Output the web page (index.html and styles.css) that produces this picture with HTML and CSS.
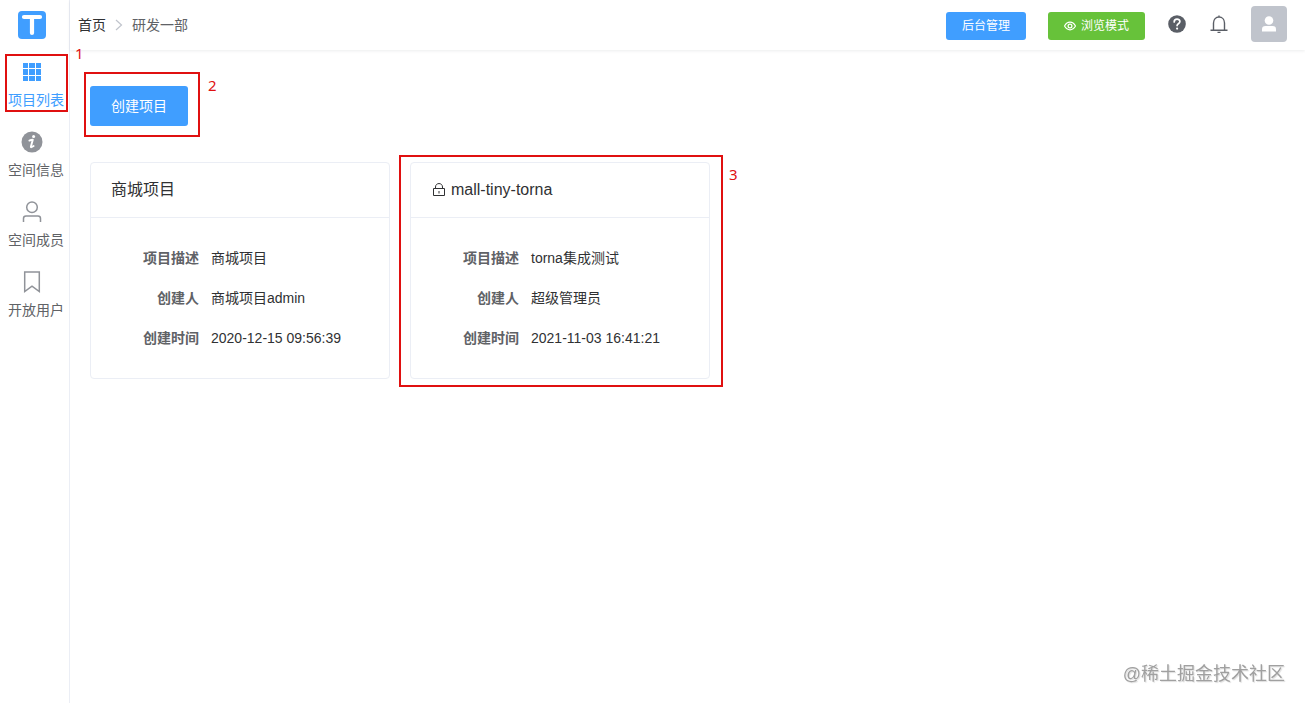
FILE: index.html
```html
<!DOCTYPE html>
<html lang="zh-CN">
<head>
  <meta charset="UTF-8">
  <title>Torna</title>
  <link rel="stylesheet" href="styles.css">
</head>
<body>
  <aside class="sidebar">
    <a class="logo" href="#" aria-label="Torna">
      <svg width="28" height="28" viewBox="0 0 28 28">
        <rect width="28" height="28" rx="4" fill="#409eff"/>
        <path d="M6 6h16M14 6v16" fill="none" stroke="#fff" stroke-width="4.200" stroke-linecap="round"/>
      </svg>
    </a>
    <nav class="menu">
      <a class="menu-item active" href="#">
        <svg class="menu-icon" viewBox="0 0 20 20" fill="currentColor">
          <path d="M1 1h5v5H1zM7 1h6v5H7zM14 1h5v5h-5zM1 7h5v6H1zM7 7h6v6H7zM14 7h5v6h-5zM1 14h5v5H1zM7 14h6v5H7zM14 14h5v5h-5z"/>
        </svg>
        <span>项目列表</span>
        <i class="mark mark-menu"><b>1</b></i>
      </a>
      <a class="menu-item" href="#">
        <svg class="menu-icon" viewBox="0 0 20 20">
          <circle cx="10" cy="10" r="10.500" fill="currentColor"/>
          <circle cx="11.600" cy="4.600" r="1.500" fill="#fff"/>
          <path d="M7.400 8.600q1.800-.9 3.400-.9L8.900 14.600q-.3 1.400 2.700-.6" fill="none" stroke="#fff" stroke-width="1.900" stroke-linecap="round" stroke-linejoin="round"/>
        </svg>
        <span>空间信息</span>
      </a>
      <a class="menu-item" href="#">
        <svg class="menu-icon" viewBox="0 0 20 20" fill="none" stroke="currentColor" stroke-width="1.500">
          <circle cx="10" cy="5.200" r="5.300"/>
          <path d="M1.500 20v-3.500q0-2.500 2.500-2.500h12q2.500 0 2.500 2.500V20"/>
        </svg>
        <span>空间成员</span>
      </a>
      <a class="menu-item" href="#">
        <svg class="menu-icon" viewBox="0 0 20 20" fill="none" stroke="currentColor" stroke-width="1.500">
          <path d="M2.700 0h14.600v19.500L10 14.200l-7.300 5.300z"/>
        </svg>
        <span>开放用户</span>
      </a>
    </nav>
  </aside>

  <div class="container">
    <header class="navbar">
      <nav class="breadcrumb">
        <a href="#">首页</a>
        <svg width="8" height="12" viewBox="0 0 8 12" fill="none" stroke="#c0c4cc" stroke-width="1.200">
          <path d="M1 1l5.500 5L1 11"/>
        </svg>
        <span>研发一部</span>
      </nav>
      <div class="right-menu">
        <button class="btn btn-small btn-primary">后台管理</button>
        <button class="btn btn-small btn-success">
          <svg width="12" height="12" viewBox="0 0 12 12" fill="none" stroke="currentColor" stroke-width="1.200">
            <path d="M.5 6C2 3.300 3.800 2.200 6 2.200S10 3.300 11.500 6C10 8.700 8.200 9.800 6 9.800S2 8.700.5 6z"/>
            <circle cx="6" cy="6" r="1.900"/>
          </svg>
          浏览模式
        </button>
        <button class="icon-btn" aria-label="帮助">
          <svg width="18" height="18" viewBox="0 0 18 18">
            <circle cx="9" cy="9" r="8.800" fill="#5a5e66"/>
            <path d="M6.200 6.900c0-3.700 5.700-3.600 5.700-.3 0 2.200-2.800 2.100-2.800 4" fill="none" stroke="#fff" stroke-width="1.700" stroke-linecap="round"/>
            <circle cx="9.100" cy="13.600" r="1.100" fill="#fff"/>
          </svg>
        </button>
        <button class="icon-btn" aria-label="消息">
          <svg width="18" height="18" viewBox="0 0 18 18" fill="none" stroke="#5a5e66" stroke-width="1.400">
            <path d="M.5 15.300h17M3.500 15.300V8c0-3.700 2.400-6 5.500-6s5.500 2.300 5.500 6v7.300M9 2V.5M7.500 17.400h3"/>
          </svg>
        </button>
        <button class="avatar" aria-label="用户">
          <svg width="16" height="16" viewBox="0 0 16 16" fill="#fff">
            <circle cx="8" cy="4.500" r="4.300"/>
            <path d="M1 15.500v-2.300Q1 10 4.500 10h7q3.500 0 3.500 3.200v2.300z"/>
          </svg>
        </button>
      </div>
    </header>

    <main class="app-main">
      <div class="toolbar">
        <button class="btn btn-primary">创建项目</button>
        <i class="mark mark-create"><b>2</b></i>
      </div>
      <div class="cards">
        <section class="card">
          <h2 class="card-header">商城项目</h2>
          <dl class="card-body">
            <dt>项目描述</dt><dd>商城项目</dd>
            <dt>创建人</dt><dd>商城项目admin</dd>
            <dt>创建时间</dt><dd>2020-12-15 09:56:39</dd>
          </dl>
        </section>
        <section class="card">
          <h2 class="card-header">
            <svg class="lock" width="16" height="16" viewBox="0 0 16 16" fill="none" stroke="currentColor">
              <path d="M2.500 6.500h11v7h-11zM4.500 6.500V5c0-4.600 7-4.600 7 0v1.500M8 9v2.500"/>
            </svg>
            mall-tiny-torna
          </h2>
          <dl class="card-body">
            <dt>项目描述</dt><dd>torna集成测试</dd>
            <dt>创建人</dt><dd>超级管理员</dd>
            <dt>创建时间</dt><dd>2021-11-03 16:41:21</dd>
          </dl>
          <i class="mark mark-card"><b>3</b></i>
        </section>
      </div>
    </main>
  </div>

  <div class="watermark">@稀土掘金技术社区</div>
</body>
</html>
```

FILE: styles.css
```css
* {
  box-sizing: border-box;
}

body {
  margin: 0;
  min-height: 100vh;
  display: flex;
  font-family: "Liberation Sans", "Noto Sans CJK SC", sans-serif;
  font-size: 14px;
  line-height: 20px;
  color: #303133;
  background: #fff;
}

a {
  color: inherit;
  text-decoration: none;
}

svg {
  display: block;
  flex: none;
}

/* sidebar */
.sidebar {
  flex: none;
  width: 70px;
  border-right: 1px solid #ebeef5;
}

.logo {
  display: flex;
  align-items: center;
  height: 50px;
  padding-left: 18px;
}

.menu-item {
  position: relative;
  display: flex;
  flex-direction: column;
  gap: 8px;
  height: 70px;
  padding: 12px 0 0 8px;
  white-space: nowrap;
  color: #606266;
}

.menu-icon {
  width: 20px;
  height: 20px;
  margin-left: 14px;
  overflow: visible;
  color: #909399;
}

.menu-item.active,
.menu-item.active .menu-icon {
  color: #409eff;
}

/* top bar */
.container {
  flex: 1;
  min-width: 0;
}

.navbar {
  display: flex;
  align-items: center;
  justify-content: space-between;
  height: 50px;
  padding: 0 18px 0 8px;
  box-shadow: 0 1px 3px rgba(0, 21, 41, 0.08);
}

.breadcrumb {
  display: flex;
  align-items: center;
  gap: 9px;
  color: #606266;
}

.breadcrumb a {
  color: #303133;
}

.right-menu {
  display: flex;
  align-items: center;
  gap: 22px;
  padding-bottom: 2px;
}

.btn {
  display: flex;
  align-items: center;
  justify-content: center;
  gap: 5px;
  height: 40px;
  padding: 0 21px;
  border: none;
  border-radius: 3px;
  font: inherit;
  color: #fff;
  cursor: pointer;
}

.btn-small {
  height: 28px;
  padding: 0 16px;
  margin-top: 4px;
  font-size: 12px;
}

.btn-primary {
  background: #409eff;
}

.btn-success {
  background: #67c23a;
}

.icon-btn {
  padding: 0 1px;
  border: none;
  background: none;
  cursor: pointer;
}

.avatar {
  display: flex;
  align-items: center;
  justify-content: center;
  width: 36px;
  height: 36px;
  padding: 0;
  border: none;
  border-radius: 4px;
  background: #c0c4cc;
  cursor: pointer;
}

/* content */
.app-main {
  padding: 36px 20px 20px;
}

.toolbar {
  position: relative;
  display: flex;
}

.cards {
  display: flex;
  flex-wrap: wrap;
  gap: 20px;
  margin-top: 36px;
}

.card {
  position: relative;
  width: 300px;
  border: 1px solid #ebeef5;
  border-radius: 4px;
}

.card-header {
  display: flex;
  align-items: center;
  gap: 4px;
  height: 55px;
  margin: 0;
  padding: 0 20px;
  border-bottom: 1px solid #ebeef5;
  font-size: 16px;
  font-weight: normal;
}

.card-body {
  display: grid;
  grid-template-columns: 88px 1fr;
  column-gap: 12px;
  margin: 0;
  padding: 20px 0 20px 20px;
  line-height: 40px;
}

.card-body dt {
  text-align: right;
  font-weight: bold;
  color: #606266;
}

.card-body dd {
  margin: 0;
}

/* numbered red frames */
.mark {
  position: absolute;
  border: 2px solid #e01010;
  pointer-events: none;
}

.mark b {
  position: absolute;
  left: 100%;
  font: normal 15px/20px "Noto Sans", sans-serif;
  color: #e01010;
}

.mark-menu {
  inset: 4px 1px 8px 5px;
}

.mark-menu b {
  top: -13px;
  margin-left: 9px;
}

.mark-create {
  top: -14px;
  left: -6px;
  width: 116px;
  height: 65px;
}

.mark-create b {
  top: 1px;
  margin-left: 10px;
}

.mark-card {
  inset: -8px -14px -9px -12px;
}

.mark-card b {
  top: 7px;
  margin-left: 8px;
}

.watermark {
  position: fixed;
  right: 20px;
  bottom: 17px;
  font-size: 18px;
  line-height: 24px;
  color: #a0a0a0;
  text-shadow: 1px 1px 1px #ddd;
}
```
